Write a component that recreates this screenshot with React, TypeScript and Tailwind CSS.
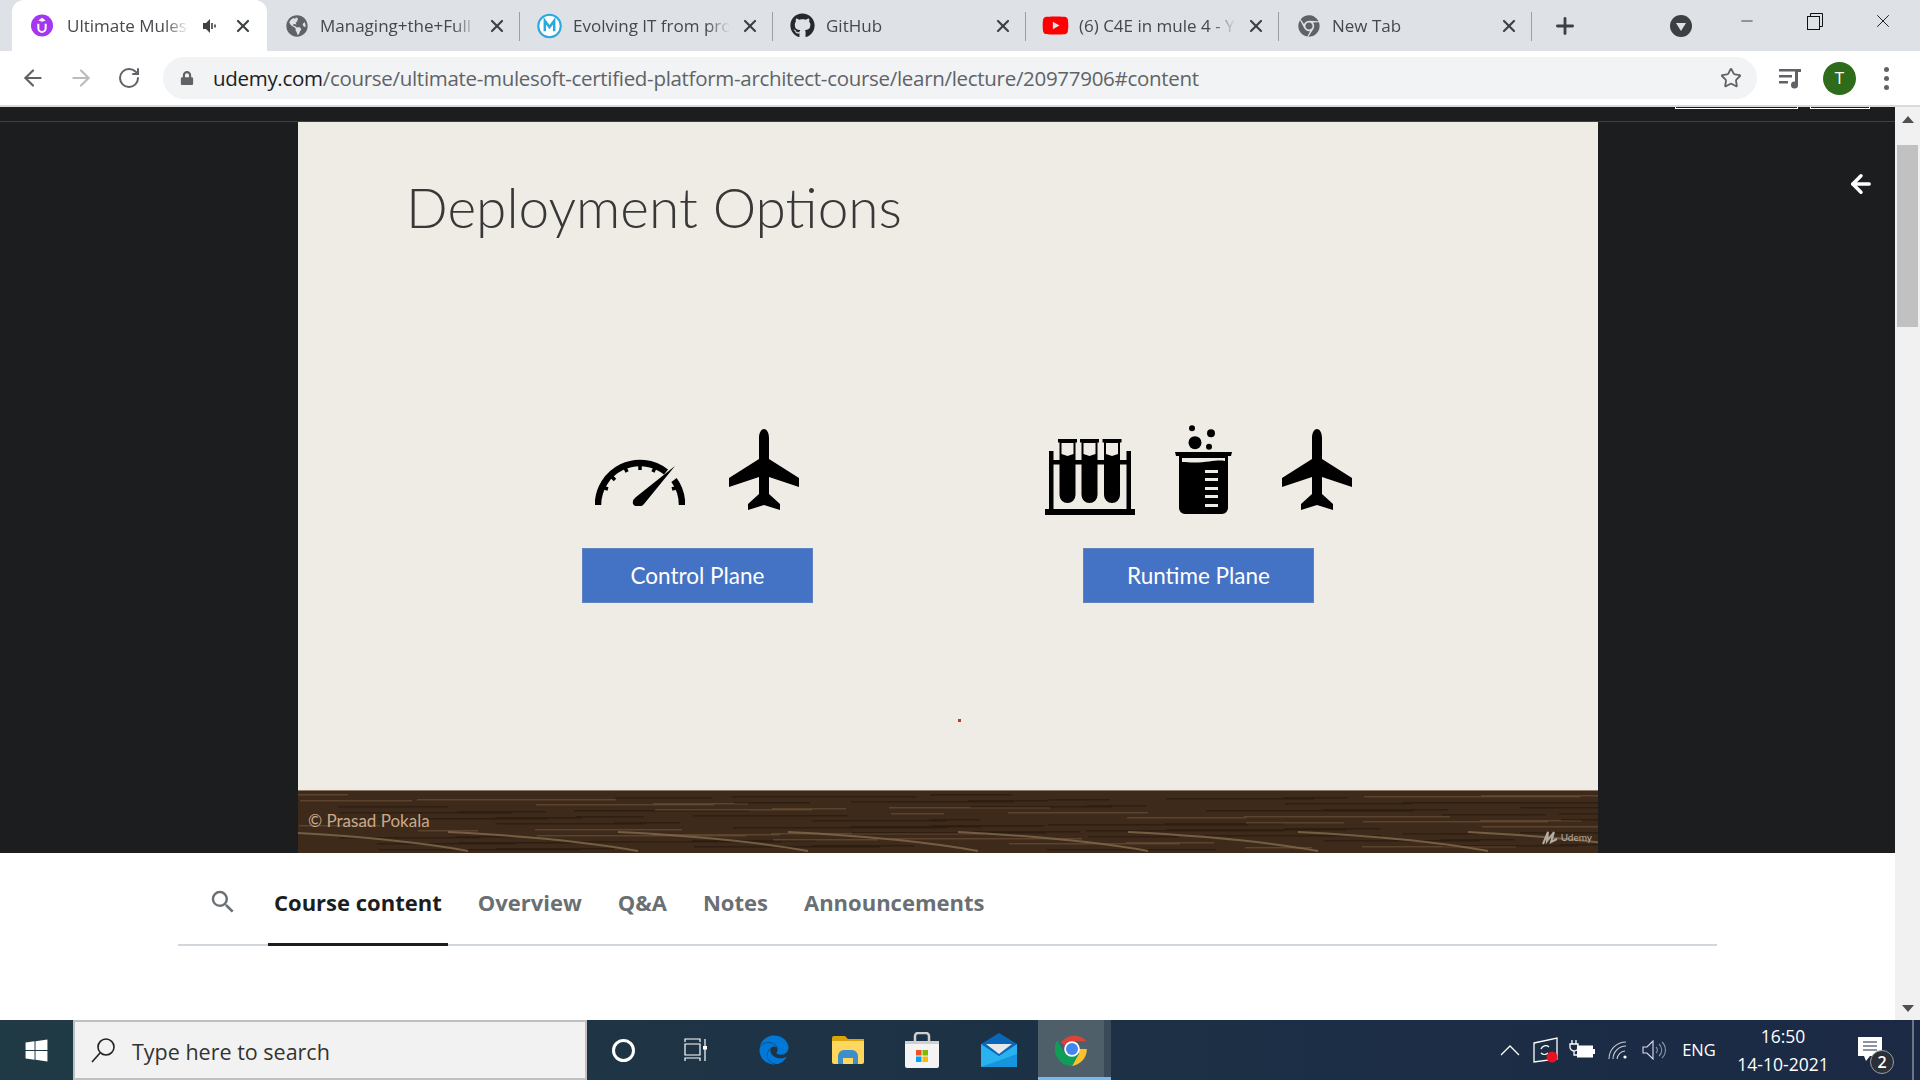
import React from 'react';
import { ArrowLeft, ArrowRight, RotateCw, Star, Plus, X, Minus } from 'lucide-react';
import { FaGithub, FaYoutube, FaChrome, FaWindows, FaEdge, FaLock, FaGlobeAmericas } from 'react-icons/fa';
import { MdSearch } from 'react-icons/md';

const UdemyIcon = () => (
  <svg width="25" height="25" viewBox="0 0 24 24">
    <circle cx="12" cy="12" r="12" fill="#a435f0" />
    <path d="M8 10v5a4 4 0 0 0 8 0v-5" fill="none" stroke="#fff" strokeWidth="2.2" />
    <path d="M12 3.5 16 6.5l-4 1.5-4-1.5z" fill="#fff" />
  </svg>
);

const MuleIcon = () => (
  <svg width="25" height="26" viewBox="0 0 24 24">
    <circle cx="12" cy="12" r="10.8" fill="#fff" stroke="#29a9df" strokeWidth="2" />
    <path d="M7.5 17V7l4.5 6 4.5-6v10" fill="none" stroke="#29a9df" strokeWidth="2.4" />
  </svg>
);

const tabs = [
  { title: 'Managing+the+Full', icon: <FaGlobeAmericas size={22} color="#5f6368" />, sep: true },
  { title: 'Evolving IT from process', icon: <MuleIcon />, sep: true },
  { title: 'GitHub', icon: <FaGithub size={25} color="#24292e" />, sep: true },
  { title: '(6) C4E in mule 4 - YouTube', icon: <FaYoutube size={27} color="#ff0000" />, sep: true },
  { title: 'New Tab', icon: <FaChrome size={22} color="#5f6368" />, sep: true },
];

const ChromeTab = ({ title, icon, sep }: { title: string; icon: React.ReactNode; sep: boolean }) => (
  <div className="w-[253px] h-[51px] flex items-center relative shrink-0">
    <div className="w-[29px] flex justify-center ml-[15px]">{icon}</div>
    <span className="ml-[9px] w-[157px] text-[17px] text-[#45484d] whitespace-nowrap overflow-hidden [mask-image:linear-gradient(to_right,black_85%,transparent)]">
      {title}
    </span>
    <X size={20} strokeWidth={2.6} color="#3c4043" className="ml-[10px]" />
    {sep && <div className="absolute right-0 top-[12px] w-[1px] h-[29px] bg-[#9aa0a6]" />}
  </div>
);

const TopBar = () => (
  <div className="h-[51px] bg-[#dee1e6] flex pl-[12px] relative font-['Open_Sans',sans-serif]">
    <div className="w-[255px] h-[51px] bg-white rounded-t-[12px] flex items-center shrink-0">
      <div className="w-[22px] ml-[19px] flex justify-center"><UdemyIcon /></div>
      <span className="ml-[14px] w-[122px] text-[17px] text-[#45484d] whitespace-nowrap overflow-hidden [mask-image:linear-gradient(to_right,black_80%,transparent)]">
        Ultimate Mulesoft
      </span>
      <svg width="16" height="16" viewBox="0 0 16 16" className="ml-[13px]">
        <path d="M1 5h3l4-4v14l-4-4H1z" fill="#3c4043" />
        <path d="M10 5v6M13 6.5v3" stroke="#3c4043" strokeWidth="1.6" />
      </svg>
      <X size={20} strokeWidth={2.6} color="#3c4043" className="ml-[15px]" />
    </div>
    {tabs.map((t) => (
      <ChromeTab key={t.title} title={t.title} icon={t.icon} sep={t.sep} />
    ))}
    <div className="w-[66px] flex items-center justify-center shrink-0">
      <Plus size={26} strokeWidth={2.6} color="#3c4043" />
    </div>
    <div className="w-[51px] flex items-center justify-center ml-[57px] shrink-0">
      <svg width="22" height="26" viewBox="0 0 22 24">
        <circle cx="11" cy="12" r="11" fill="#3c4043" />
        <path d="M6 9h10l-5 8z" fill="#dee1e6" />
      </svg>
    </div>
    {/* window buttons */}
    <div className="flex items-start pt-[8px] ml-[7px]">
      <div className="w-[68px] h-[26px] flex items-center justify-center"><Minus size={18} strokeWidth={1} color="#111" /></div>
      <div className="w-[68px] h-[26px] flex items-center justify-center">
        <svg width="16" height="17" viewBox="0 0 16 17" fill="none" stroke="#111" strokeWidth="1">
          <rect x="0.5" y="3.5" width="12" height="13" />
          <path d="M3.5 3.5v-3h12v13h-3" />
        </svg>
      </div>
      <div className="w-[68px] h-[26px] flex items-center justify-center"><X size={22} strokeWidth={1} color="#111" /></div>
    </div>
  </div>
);

const AddressBar = () => (
  <div className="h-[54px] bg-white flex items-center font-['Open_Sans',sans-serif]">
    <div className="w-[163px] flex items-center pl-[20px] shrink-0">
      <ArrowLeft size={26} strokeWidth={2} color="#5f6368" />
      <ArrowRight size={26} strokeWidth={2} color="#babcbe" className="ml-[22px]" />
      <RotateCw size={24} strokeWidth={2} color="#5f6368" className="ml-[23px]" />
    </div>
    <div className="w-[1594px] h-[42px] bg-[#f1f3f4] rounded-full flex items-center shrink-0">
      <FaLock size={14} color="#5f6368" className="ml-[17px]" />
      <span className="ml-[19px] text-[20.5px] tracking-[-0.3px] text-[#5f6368] whitespace-nowrap">
        <span className="text-[#202124]">udemy.com</span>/course/ultimate-mulesoft-certified-platform-architect-course/learn/lecture/20977906#content
      </span>
      <Star size={22} strokeWidth={2} color="#5f6368" className="ml-auto mr-[15px]" />
    </div>
    <svg width="24" height="24" viewBox="0 0 24 24" className="ml-[21px]" fill="#5f6368">
      <path d="M1 3h16v2.5H1zM1 9h13v2.5H1zM1 15h9v2.5H1z" />
      <path d="M17 3h6v3h-3v13a3.5 3.5 0 1 1-3-3.4z" />
    </svg>
    <div className="w-[33px] h-[33px] rounded-full bg-[#2e6b1a] text-white flex items-center justify-center ml-[21px] text-[17px]">T</div>
    <div className="ml-[28px] flex flex-col gap-[4px]">
      <div className="w-[5px] h-[5px] rounded-full bg-[#5f6368]" />
      <div className="w-[5px] h-[5px] rounded-full bg-[#5f6368]" />
      <div className="w-[5px] h-[5px] rounded-full bg-[#5f6368]" />
    </div>
  </div>
);

const Plane = ({ className }: { className?: string }) => (
  <svg width="70" height="82" viewBox="0 0 70 82" className={className}>
    <path d="M35 0C38 0 40 4 40 9L40 30 70 49 70 58 40 48 40 65 51 75 51 81 35 76 19 81 19 75 30 65 30 48 0 58 0 49 30 30 30 9C30 4 32 0 35 0Z" fill="#000" />
  </svg>
);

const Gauge = ({ className }: { className?: string }) => (
  <svg width="90" height="50" viewBox="0 0 90 50" className={className} fill="none" stroke="#000" strokeWidth="6.5">
    <path d="M3 49A42 42 0 0 1 71 16" />
    <path d="M79 24A42 42 0 0 1 87 49" />
    <path strokeWidth="3.5" d="M13 33 7 31.2M20 24 15.3 19.3M32 16 29.3 10M45 14V7M58 16 60.7 10M77 33 83 31.2" />
    <path d="M80 10 49 48Q43 54 38 48 37 44 41 41Z" fill="#000" stroke="none" />
  </svg>
);

const TestTubes = ({ className }: { className?: string }) => (
  <svg width="90" height="76" viewBox="0 0 90 76" className={className}>
    <path d="M4 12h4.5v58H4zM81.5 12H86v58h-4.5zM0 70h90v6H0zM4 21h81v4.5H4z" fill="#000" />
    {[13, 35, 57.5].map((x) => (
      <g key={x}>
        <path d={`M${x} 0h19v3.5h-1.5V56a8 8 0 0 1-16 0V3.5H${x}z`} fill="#000" />
        <path d={`M${x + 3.5} 4h12v11l-6 2-6-2z`} fill="#efece5" />
      </g>
    ))}
  </svg>
);

const Beaker = ({ className }: { className?: string }) => (
  <svg width="57" height="90" viewBox="0 0 57 90" className={className} fill="#000">
    <circle cx="17" cy="3.3" r="3" />
    <circle cx="36" cy="8.3" r="4" />
    <circle cx="20" cy="17.7" r="6.5" />
    <circle cx="34" cy="21.7" r="3" />
    <path d="M0 27h57l-1 4h-3v52a6 6 0 0 1-6 6H10a6 6 0 0 1-6-6V31H1z" />
    <path d="M7 33h43v3c-10-2-18 3-43 1z" fill="#efece5" />
    <path d="M30 45h13v3H30zM30 53h13v3H30zM30 62h13v3H30zM30 70h13v3H30zM30 79h13v3H30z" fill="#efece5" />
  </svg>
);

const PlaneButton = ({ label, className }: { label: string; className?: string }) => (
  <div className={`w-[231px] h-[55px] bg-[#4472c4] border border-[#5f83c2] flex items-center justify-center text-white text-[22.5px] font-['Lato',sans-serif] ${className ?? ''}`}>
    {label}
  </div>
);

// grain of the wood: short streaks, spread out with a fixed stepping
const streaks = Array.from({ length: 90 }, (_, i) => ({
  x: (i * 197) % 1300,
  y: 3 + ((i * 23) % 56),
  w: 50 + ((i * 37) % 170),
  light: i % 3 === 0,
}));

const WoodStrip = () => (
  <div className="h-[63px] relative overflow-hidden border-t border-[#8a7a6a] bg-[#3d2a1a] flex items-center font-['Lato',sans-serif]">
    <svg className="absolute inset-0" width="1300" height="63" viewBox="0 0 1300 63" fill="none">
      {streaks.map((s, i) => (
        <rect key={i} x={s.x} y={s.y} width={s.w} height="1.5" fill={s.light ? '#6a4f36' : '#2a1b10'} opacity="0.7" />
      ))}
      {[-20, 150, 320, 490, 660, 830, 1000, 1170].map((x) => (
        <path key={x} d={`M${x} 41C${x + 60} 44 ${x + 130} 49 ${x + 190} 60`} stroke="#7f674c" strokeWidth="2" opacity="0.85" />
      ))}
    </svg>
    <span className="relative ml-[10px] -mt-[2px] text-[17px] text-[#c9a98a]">© Prasad Pokala</span>
    <div className="absolute right-[6px] bottom-[8px] flex items-center gap-[3px] text-[#b5ada4] text-[10px]">
      <svg width="16" height="14" viewBox="0 0 16 14" fill="none" stroke="#b5ada4" strokeWidth="2">
        <path d="M1 13 6 1 5 10 12 1 9 11 15 8" />
      </svg>
      Udemy
    </div>
  </div>
);

const Slide = () => (
  <div className="w-[1300px] flex flex-col relative shrink-0">
    <div className="h-[668px] bg-[#efece5] flex flex-col">
      <div className="h-[303px] pl-[108px] pt-[50px] text-[55px] leading-[70px] text-[#383838] font-['Lato',sans-serif] font-light">
        Deployment Options
      </div>
      <div className="flex pl-[284px]">
        <div className="w-[463px] shrink-0">
          <div className="h-[90px] flex items-start pl-[13px]">
            <Gauge className="mt-[31px]" />
            <Plane className="mt-[4px] ml-[44px]" />
          </div>
          <PlaneButton label="Control Plane" className="mt-[33px]" />
        </div>
        <div>
          <div className="h-[90px] flex items-start">
            <TestTubes className="mt-[14px]" />
            <Beaker className="ml-[40px]" />
            <Plane className="mt-[4px] ml-[50px]" />
          </div>
          <PlaneButton label="Runtime Plane" className="mt-[33px] ml-[38px]" />
        </div>
      </div>
    </div>
    <WoodStrip />
    <div className="absolute left-[660px] top-[597px] w-[3px] h-[3px] bg-[#c0392b]" />
  </div>
);

const Player = () => (
  <div className="h-[746px] bg-[#1c1d1f] flex flex-col">
    <div className="h-[15px] border-b border-[#3e4143] flex justify-end pr-[25px]">
      <div className="w-[123px] h-[2px] border border-t-0 border-white" />
      <div className="w-[60px] h-[2px] border border-t-0 border-white ml-[12px]" />
    </div>
    <div className="flex-1 flex">
      <div className="w-[298px] shrink-0" />
      <Slide />
      <div className="flex-1 flex justify-end pr-[20px] pt-[48px]">
        <ArrowLeft size={28} strokeWidth={3} color="#fff" />
      </div>
    </div>
  </div>
);

const navItems = ['Course content', 'Overview', 'Q&A', 'Notes', 'Announcements'];

const CourseNav = () => (
  <div className="flex-1 bg-white pl-[178px] font-['Open_Sans',sans-serif]">
    <div className="w-[1539px] h-[93px] border-b-2 border-[#d1d7dc] flex pl-[32px]">
      <div className="w-[24px] mr-[34px] pt-[34px]">
        <MdSearch size={30} color="#6a6f73" className="-ml-[2px]" />
      </div>
      <div className="flex gap-[24px]">
        {navItems.map((item, i) => (
          <div
            key={item}
            className={`px-[6px] h-[93px] pt-[34px] leading-[30px] text-[22px] font-bold whitespace-nowrap ${i === 0 ? 'text-[#1c1d1f] border-b-[3px] border-[#1c1d1f]' : 'text-[#6a6f73]'}`}
          >
            {item}
          </div>
        ))}
      </div>
    </div>
  </div>
);

const Scrollbar = () => (
  <div className="w-[25px] bg-[#f1f1f1] flex flex-col items-center relative shrink-0">
    <div className="h-[24px] flex items-center">
      <div className="w-0 h-0 border-l-[6px] border-r-[6px] border-b-[7px] border-l-transparent border-r-transparent border-b-[#505050]" />
    </div>
    <div className="w-[21px] h-[182px] mt-[14px] bg-[#c1c1c1]" />
    <div className="mt-auto h-[24px] flex items-center">
      <div className="w-0 h-0 border-l-[6px] border-r-[6px] border-t-[7px] border-l-transparent border-r-transparent border-t-[#505050]" />
    </div>
  </div>
);

const ChromeColor = () => (
  <svg width="34" height="34" viewBox="0 0 48 48">
    <path d="M24 24 8 15A24 24 0 0 1 45 13H24z" fill="#db4437" />
    <path d="M24 24h21a24 24 0 0 1-21 24l10-18z" fill="#fbc02d" />
    <path d="M24 24 14 30 3 12A24 24 0 0 0 24 48l10-18z" fill="#0f9d58" />
    <circle cx="24" cy="24" r="11" fill="#fff" />
    <circle cx="24" cy="24" r="8.5" fill="#4285f4" />
  </svg>
);

const Taskbar = () => (
  <div className="h-[60px] bg-gradient-to-r from-[#203a45] to-[#1b2945] flex items-stretch font-['Open_Sans',sans-serif]">
    <div className="w-[73px] flex items-center justify-center shrink-0">
      <FaWindows size={25} color="#fff" />
    </div>
    <div className="w-[514px] bg-[#f2f2f2] border-2 border-[#c0c0c0] flex items-center shrink-0">
      <svg width="26" height="26" viewBox="0 0 26 26" fill="none" stroke="#222" strokeWidth="1.6" className="ml-[15px]">
        <circle cx="16" cy="10" r="8" />
        <path d="M10 16 2 25" />
      </svg>
      <span className="ml-[16px] mt-[4px] text-[21.5px] text-[#333]">Type here to search</span>
    </div>
    <div className="w-[73px] flex items-center justify-center shrink-0">
      <div className="w-[23px] h-[23px] rounded-full border-[3px] border-white" />
    </div>
    <div className="w-[71px] flex items-center justify-center shrink-0">
      <svg width="24" height="24" viewBox="0 0 24 24" fill="none" stroke="#fff" strokeWidth="1.2">
        <path d="M1 4V1h15v3M1 6h15v11H1zM1 23v-3h15v3M21 1v22" />
        <rect x="19" y="8" width="4" height="3.5" fill="#fff" stroke="none" />
      </svg>
    </div>
    <div className="w-[86px] flex items-center justify-center shrink-0">
      <FaEdge size={30} color="#0078d7" />
    </div>
    <div className="w-[62px] flex items-center justify-center shrink-0">
      <svg width="32" height="28" viewBox="0 0 32 28">
        <path d="M0 2a2 2 0 0 1 2-2h11l3 3h16v6H0z" fill="#dba40a" />
        <path d="M0 5h32v21a2 2 0 0 1-2 2H2a2 2 0 0 1-2-2z" fill="#ffd75e" />
        <path d="M6 28v-8a6 6 0 0 1 6-6h8a6 6 0 0 1 6 6v8h-5v-6H11v6z" fill="#3e8ecb" />
      </svg>
    </div>
    <div className="w-[86px] flex items-center justify-center shrink-0">
      <svg width="34" height="36" viewBox="0 0 34 36">
        <path d="M10 10V4a3 3 0 0 1 3-3h8a3 3 0 0 1 3 3v6" fill="none" stroke="#cfcfcf" strokeWidth="2.5" />
        <path d="M0 9h34v25a2 2 0 0 1-2 2H2a2 2 0 0 1-2-2z" fill="#f4f4f4" />
        <path d="M0 9h34v3H0z" fill="#d0d0d0" />
        <path d="M11 18h5.5v5.5H11z" fill="#f25022" />
        <path d="M17.5 18H23v5.5h-5.5z" fill="#7fba00" />
        <path d="M11 24.5h5.5V30H11z" fill="#00a4ef" />
        <path d="M17.5 24.5H23V30h-5.5z" fill="#ffb900" />
      </svg>
    </div>
    <div className="w-[68px] flex items-center justify-center shrink-0">
      <svg width="36" height="34" viewBox="0 0 36 34">
        <path d="M0 11 18 0l18 11v23H0z" fill="#0a66b7" />
        <path d="M5 11h26l-13 10z" fill="#e8e8e8" />
        <path d="M0 11l18 12 18-12v23H0z" fill="#2ab2ef" />
        <path d="M0 34l36-13v13z" fill="#1694dc" />
      </svg>
    </div>
    <div className="w-[5px] shrink-0" />
    <div className="w-[66px] bg-[#4e5f6a] flex items-center justify-center pl-[2px] border-b-[3px] border-[#76b9ed] shrink-0">
      <ChromeColor />
    </div>
    <div className="w-[7px] bg-[#3a4a58] border-b-[3px] border-[#76b9ed] shrink-0" />
    <div className="flex-1" />
    <div className="flex items-center text-white">
      <div className="w-[36px] flex justify-center">
        <svg width="20" height="12" viewBox="0 0 20 12" fill="none" stroke="#fff" strokeWidth="1.3"><path d="M1 11 10 2l9 9" /></svg>
      </div>
      <div className="w-[36px] flex justify-center">
        <svg width="26" height="26" viewBox="0 0 26 26" fill="none" stroke="#fff" strokeWidth="1.3">
          <path d="M1 6 24 1v21L1 25z" />
          <path d="M8 12a5 5 0 0 1 8-2M15 16a5 5 0 0 1-7 0" />
          <circle cx="19" cy="20" r="5.5" fill="#e81123" stroke="none" />
        </svg>
      </div>
      <div className="w-[36px] flex justify-center">
        <svg width="26" height="20" viewBox="0 0 26 20">
          <path d="M3 0v4M7 0v4M1 4h8v3a4 4 0 0 1-8 0zM5 11v4h3" fill="none" stroke="#fff" strokeWidth="1.3" />
          <rect x="8.5" y="6" width="15" height="11" fill="#fff" stroke="#fff" />
          <rect x="24" y="9" width="2" height="5" fill="#fff" />
        </svg>
      </div>
      <div className="w-[36px] flex justify-center">
        <svg width="20" height="20" viewBox="0 0 20 20" fill="none" stroke="#c8ced6" strokeWidth="1.1">
          <path d="M1 19A17 17 0 0 1 18 2M5 19A13 13 0 0 1 18 6M9 19a9 9 0 0 1 8-8" />
          <circle cx="17" cy="17" r="1.6" fill="#fff" stroke="none" />
        </svg>
      </div>
      <div className="w-[36px] flex justify-center">
        <svg width="24" height="20" viewBox="0 0 24 20" fill="none" stroke="#dde" strokeWidth="1.1">
          <path d="M1 7h4l6-6v18l-6-6H1z" />
          <path d="M14 7a4 4 0 0 1 0 6M17 4a8 8 0 0 1 0 12M20 2a11 11 0 0 1 0 16" stroke="#8b96a5" />
        </svg>
      </div>
      <div className="w-[54px] text-center text-[16.5px] mt-[1px]">ENG</div>
      <div className="w-[114px] text-center text-[17.5px] leading-[28px]">
        <div>16:50</div>
        <div>14-10-2021</div>
      </div>
      <div className="w-[72px] relative flex justify-center h-full">
        <svg width="24" height="24" viewBox="0 0 24 24" className="absolute left-[18px] top-[17px]">
          <path d="M0 0h24v19H12l-4 5-2-5H0z" fill="#fff" />
          <path d="M5 5h14M5 9h14M5 13h14" stroke="#1b2945" strokeWidth="1.2" />
        </svg>
        <div className="absolute left-[30px] top-[30px] w-[24px] h-[24px] rounded-full bg-[#2b2f36] border border-[#9aa0a6] flex items-center justify-center text-[16px] font-semibold">2</div>
      </div>
      <div className="w-[2px] h-full bg-[#6b7684]" />
      <div className="w-[6px]" />
    </div>
  </div>
);

export default function App() {
  return (
    <div className="w-[1920px] h-[1080px] flex flex-col overflow-hidden bg-white">
      <TopBar />
      <AddressBar />
      <div className="h-[2px] bg-[#d9dadb]" />
      <div className="flex-1 flex min-h-0">
        <div className="flex-1 flex flex-col min-w-0">
          <Player />
          <CourseNav />
        </div>
        <Scrollbar />
      </div>
      <Taskbar />
    </div>
  );
}
